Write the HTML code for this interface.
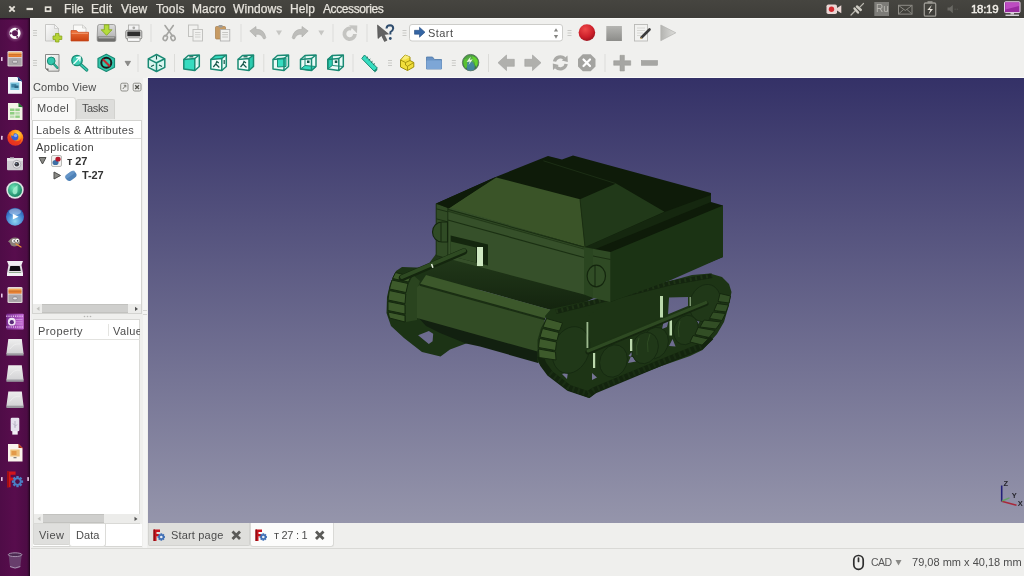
<!DOCTYPE html>
<html>
<head>
<meta charset="utf-8">
<title>FreeCAD</title>
<style>
*{box-sizing:border-box;margin:0;padding:0}
html,body{width:1024px;height:576px;overflow:hidden;background:#efefed;font-family:"Liberation Sans","DejaVu Sans",sans-serif;}
#root{position:relative;width:1024px;height:576px;overflow:hidden;background:#efefed}
.abs{position:absolute}
#topbar{position:absolute;left:0;top:0;width:1024px;height:18px;background:linear-gradient(#464540,#3e3d39);}
#topbar .m{position:absolute;top:1.500px;-webkit-text-stroke:0.250px #e6e3dc;font-size:12px;line-height:15px;color:#e6e3dc;white-space:nowrap;letter-spacing:0.1px}
#launcher{position:absolute;left:0;top:18px;width:31px;height:558px;border-right:1px solid #f6f1f6;background:linear-gradient(#2a0626 0,rgba(42,6,38,0) 2.5px),linear-gradient(90deg,#4f0c47 0%,#580d4d 50%,#4d0c45 90%,#3a0a34 95%,#1f051c 100%);}
#view3d{position:absolute;left:148px;top:78px;width:876px;height:445px;background:linear-gradient(#343167 0%,#9595ab 100%);}
#combo{position:absolute;left:31px;top:78px;width:117px;height:470px;background:#efefed}
#tabbar{position:absolute;left:148px;top:523px;width:876px;height:25px;background:#efefed}
#status{position:absolute;left:31px;top:548px;width:993px;height:28px;background:#efefed;border-top:1px solid #d9d9d6}
.t,.m{will-change:transform}
.t{position:absolute;white-space:nowrap;color:#4a4a4a;font-size:12px;line-height:14px}
</style>
</head>
<body>
<div id="root">

<!-- TOPBAR -->
<div id="topbar">
<svg class="abs" style="left:0;top:0" width="1024" height="18" viewBox="0 0 1024 18">
  <!-- window controls -->
  <path d="M9.300,6.300 L14.700,11.700 M14.700,6.300 L9.300,11.700" stroke="#e4e0d8" stroke-width="1.900" fill="none"/>
  <rect x="26.500" y="7.900" width="6.500" height="2.200" fill="#e4e0d8"/>
  <rect x="45.600" y="7.200" width="4.900" height="4" fill="#2f2e2b" stroke="#e4e0d8" stroke-width="1.700"/>
  <!-- camera/record indicator -->
  <rect x="826.500" y="4.500" width="10.500" height="9.500" rx="1.800" fill="#ead6d4"/>
  <path d="M837,8 L841.300,5.200 V13.200 L837,10.500 Z" fill="#ead6d4"/>
  <circle cx="831.500" cy="9.200" r="2.700" fill="#d42a30"/>
  <!-- plug -->
  <g stroke="#b9b6ae" fill="none" stroke-linecap="round"><path d="M851,15 L855,11" stroke-width="1.200"/><path d="M863.500,3.500 L859.800,7.200" stroke-width="1.200"/><path d="M854.500,8.500 L858,12.500 M857,6.500 L860.800,10" stroke-width="2.400" stroke="#cfccc4"/></g>
  <!-- Ru -->
  <rect x="874.300" y="2" width="14.700" height="14" fill="#7d7c78"/>
  <!-- mail -->
  <rect x="898.500" y="5.300" width="13.500" height="8.800" fill="none" stroke="#8f8d87" stroke-width="1"/>
  <path d="M899,5.800 L905.300,10.500 L911.500,5.800 M899,13.600 L903.500,9.500 M911.500,13.600 L907,9.500" fill="none" stroke="#8f8d87" stroke-width=".9"/>
  <!-- battery -->
  <rect x="924.300" y="3" width="11.400" height="13.200" rx="1.200" fill="none" stroke="#9b9993" stroke-width="1.300"/>
  <rect x="927.500" y="1.200" width="5" height="2" fill="#9b9993"/>
  <path d="M931.800,5 L927.300,10 H930.300 L928.500,14.500 L933,9 H930 Z" fill="#e4e0d8"/>
  <!-- volume muted -->
  <path d="M947.500,7.600 H949.800 L952.800,5 V13.200 L949.800,10.600 H947.500 Z" fill="#6a6964"/>
  <path d="M954.500,9.200 H959" stroke="#5e5d59" stroke-width="1" stroke-dasharray="1.200 1"/>
  <!-- monitor -->
  <rect x="1004.500" y="1.800" width="15.500" height="10.800" rx="1" fill="#9a2aa0" stroke="#e9d9ea" stroke-width="1"/>
  <path d="M1005.500,2.800 H1019 V6 L1005.500,9.500 Z" fill="#c858cc" opacity=".75"/>
  <rect x="1010.500" y="13" width="3.500" height="1.500" fill="#cfcad0"/><rect x="1005.500" y="14.600" width="13.500" height="1.300" fill="#e4e0e6"/>
</svg>
  <span class="m" style="left:875.600px;top:2.300px;font-size:10px;line-height:14px;color:#b9b7b1;letter-spacing:0;-webkit-text-stroke:0">Ru</span>
  <span class="m" style="left:64px">File</span>
  <span class="m" style="left:91px">Edit</span>
  <span class="m" style="left:121px">View</span>
  <span class="m" style="left:156px">Tools</span>
  <span class="m" style="left:192px">Macro</span>
  <span class="m" style="left:233px">Windows</span>
  <span class="m" style="left:290px">Help</span>
  <span class="m" style="left:323px;letter-spacing:-0.400px">Accessories</span>
  <span class="m" style="left:970.500px;font-size:11.500px;letter-spacing:-0.300px;color:#f2efe9;-webkit-text-stroke:0.450px #f2efe9">18:19</span>
</div>

<!-- LAUNCHER -->
<div id="launcher">
<svg class="abs" style="left:0;top:0" width="31" height="558" viewBox="0 18 31 558">
<defs>
  <radialGradient id="ubG" cx=".5" cy=".5" r=".5"><stop offset="0" stop-color="#fff" stop-opacity=".55"/><stop offset=".6" stop-color="#e8c8e4" stop-opacity=".3"/><stop offset="1" stop-color="#c090c0" stop-opacity="0"/></radialGradient>
  <radialGradient id="ffG" cx=".65" cy=".25" r=".9"><stop offset="0" stop-color="#ffd83a"/><stop offset=".4" stop-color="#ff8a16"/><stop offset=".8" stop-color="#e8311f"/><stop offset="1" stop-color="#c2185b"/></radialGradient>
  <radialGradient id="grG" cx=".4" cy=".35" r=".7"><stop offset="0" stop-color="#6fe6b9"/><stop offset="1" stop-color="#12805f"/></radialGradient>
  <radialGradient id="blG" cx=".5" cy=".75" r=".8"><stop offset="0" stop-color="#8fd6f2"/><stop offset=".6" stop-color="#3f7fce"/><stop offset="1" stop-color="#24499a"/></radialGradient>
  <linearGradient id="drG" x1="0" y1="0" x2="0" y2="1"><stop offset="0" stop-color="#eeeeee"/><stop offset="1" stop-color="#d2d2d4"/></linearGradient>
  <linearGradient id="viG" x1="0" y1="0" x2="1" y2="0"><stop offset="0" stop-color="#7a2c92"/><stop offset="1" stop-color="#c56ad6"/></linearGradient>
  <linearGradient id="orG" x1="0" y1="0" x2="0" y2="1"><stop offset="0" stop-color="#f9b562"/><stop offset="1" stop-color="#e37222"/></linearGradient>
</defs>
<!-- pips -->
<g fill="#e9c9e6"><rect x="1" y="57" width="1.600" height="4" rx=".5"/><rect x="1" y="135.800" width="1.600" height="4" rx=".5"/><rect x="1" y="293.500" width="1.600" height="4" rx=".5"/><rect x="1" y="477" width="1.600" height="4" rx=".5"/><rect x="27.300" y="477" width="1.600" height="4" rx=".5"/></g>
<!-- ubuntu -->
<circle cx="15" cy="33.300" r="9" fill="url(#ubG)"/>
<circle cx="15" cy="33.300" r="4.300" fill="none" stroke="#fff" stroke-width="2.600"/>
<circle cx="15" cy="33.300" r="2.800" fill="#5b1c55"/>
<g fill="#5b1c55"><circle cx="10.700" cy="33.300" r="1.100"/><circle cx="17.200" cy="29.600" r="1.100"/><circle cx="17.200" cy="37" r="1.100"/></g>
<!-- files -->
<rect x="7.500" y="51" width="15" height="15.600" rx="1.300" fill="#d9cfd0"/>
<rect x="8.500" y="52.300" width="13" height="4.700" fill="url(#orG)"/>
<rect x="8.500" y="54" width="13" height="1.200" fill="#b85a1c" opacity=".6"/>
<rect x="8.500" y="58" width="13" height="7.600" rx=".8" fill="#a9a5a8"/>
<rect x="12.500" y="60.300" width="5" height="2.800" rx="1" fill="#d5d2d4" stroke="#77747a" stroke-width=".6"/>
<!-- writer -->
<path d="M8,77 H18 L22,81 V93.700 H8 Z" fill="#f4f6fa"/>
<path d="M18,77 L22,81 H18 Z" fill="#1f3f75"/><path d="M17,77 H18 L22,81 V82 Z" fill="#23508f"/>
<rect x="10.300" y="82.500" width="9" height="7.500" fill="#7cc3dc"/><rect x="11.300" y="84" width="5" height="3.500" fill="#3f86a6"/><rect x="14.500" y="85.500" width="4" height="2.500" fill="#2c6483"/>
<!-- calc -->
<path d="M8,103 H18.500 L22.500,107 V120 H8 Z" fill="#f3f3e6"/>
<path d="M18,103 H18.500 L22.500,107 V108 Z" fill="#2e9a3c"/><path d="M18.500,103 L22.500,107 H18.500 Z" fill="#1d7a2b"/>
<g fill="#8fce82"><rect x="10" y="108.500" width="4.500" height="2.600"/><rect x="15.300" y="108.500" width="4.500" height="2.600"/><rect x="10" y="112" width="4.500" height="2.600"/><rect x="15.300" y="112" width="4.500" height="2.600" fill="#b9dcae"/><rect x="10" y="115.500" width="4.500" height="2.400" fill="#b9dcae"/><rect x="15.300" y="115.500" width="4.500" height="2.400"/></g>
<!-- firefox -->
<circle cx="15.300" cy="137.800" r="8" fill="url(#ffG)"/>
<circle cx="14.800" cy="136.800" r="3.600" fill="#3a5fd0"/><circle cx="15.600" cy="135.600" r="1.700" fill="#7ea8ff"/>
<path d="M8.500,134 Q11,139 15,141 Q19.500,142 21.500,138 Q21,144.500 15.300,145.300 Q8,144.500 8.500,134Z" fill="#e8311f" opacity=".85"/>
<path d="M11,133.500 Q13,131 15,132.500 Q13,134 13.500,136 Q11,136 11,133.500Z" fill="#ff9a1e"/>
<!-- camera -->
<rect x="7" y="159.500" width="16" height="10.800" rx="1" fill="#cfcdd2"/><rect x="7" y="158" width="16" height="3" fill="#e4e2e6"/>
<rect x="10" y="157.300" width="4" height="1.600" fill="#bdbbc0"/>
<circle cx="16.800" cy="164.300" r="4" fill="#e9e8ec" stroke="#9a989e" stroke-width=".7"/><circle cx="16.800" cy="164.300" r="2.300" fill="#3a3a42"/><circle cx="16.200" cy="163.600" r=".7" fill="#9bb0d0"/>
<!-- green orb -->
<circle cx="15" cy="190" r="8.700" fill="#dfe5e4"/><circle cx="15" cy="190" r="7.100" fill="url(#grG)"/>
<path d="M17.500,185 Q14,187 12.500,191 Q12.500,194 15,194.500 Q17.800,193.500 17.500,190 Z" fill="#a9f2d3" opacity=".8"/>
<!-- blue orb -->
<circle cx="15" cy="216.700" r="9" fill="url(#blG)"/>
<ellipse cx="15" cy="211.700" rx="6" ry="3.200" fill="#fff" opacity=".35"/>
<path d="M12.800,213.800 L18.600,216.700 L12.800,219.600 Z" fill="#fff"/>
<!-- gimp -->
<path d="M8,241.500 L10.500,239 Q14,236.800 18,238 Q20.500,239.500 20,243 Q18,246.500 14,246.500 Q10.500,246 10,243 Z" fill="#8a7f78"/>
<circle cx="13.800" cy="240.800" r="1.900" fill="#fff"/><circle cx="17.300" cy="240.600" r="1.900" fill="#fff"/><circle cx="14.200" cy="241" r=".8" fill="#222"/><circle cx="17.600" cy="240.900" r=".8" fill="#222"/>
<path d="M16,244 L21,247" stroke="#e8923a" stroke-width="1.300" stroke-linecap="round"/>
<!-- scanner -->
<path d="M7,261 H23 L21.500,265 H8.500 Z" fill="#f0eef2"/>
<path d="M8.500,265 H21.500 L23,273 H7 Z" fill="#e2e0e4"/>
<path d="M10.300,266 H19.700 L20.700,271 H9.300 Z" fill="#0d0d10"/>
<rect x="7" y="273" width="16" height="3" fill="#f3f2f5"/><rect x="9" y="272" width="12" height=".8" fill="#7fa07a"/>
<!-- files drawer -->
<rect x="7.500" y="287" width="15" height="16" rx="1.300" fill="#e1d9da"/>
<rect x="8.500" y="288.600" width="13" height="5" fill="url(#orG)"/><rect x="8.500" y="290.500" width="13" height="1.200" fill="#b85a1c" opacity=".6"/>
<rect x="8.500" y="294.600" width="13" height="7.400" rx=".8" fill="#aaa6a9"/>
<rect x="12.800" y="297" width="4.500" height="2.800" rx="1.200" fill="#e5e3e5" stroke="#77747a" stroke-width=".6"/>
<!-- video -->
<rect x="6.300" y="313.800" width="17.500" height="15.600" rx="1" fill="url(#viG)"/>
<path d="M6.300,316.200 H23.800 M6.300,327 H23.800" stroke="#e9c6f0" stroke-width="1.400" stroke-dasharray="1 1.200"/>
<circle cx="11.800" cy="321.700" r="3.900" fill="#f0e4f4"/><circle cx="11.800" cy="322.200" r="2.100" fill="#5a2a7a"/>
<path d="M15.500,319.500 H22.500 M15.500,321.800 H22.500 M15.500,324 H22.500" stroke="#d59be2" stroke-width=".8"/>
<!-- drives -->
<g id="drv"><path d="M8.300,339 H21.800 L23.600,354 H6.400 Z" fill="url(#drG)"/><path d="M6.400,353.300 H23.600 V355.600 H6.400 Z" fill="#9b9aa0"/><path d="M10,349 Q14,343 20,344" stroke="#efefef" stroke-width="1" fill="none" opacity=".8"/></g>
<use href="#drv" y="26.200"/><use href="#drv" y="52.400"/>
<!-- usb -->
<rect x="10.700" y="417.800" width="8.600" height="13.500" rx="1.300" fill="#e6e2ee"/><rect x="12.300" y="431" width="5.400" height="3.600" fill="#f2f0f6"/>
<path d="M15,421 V428 M15,425.500 L13,423.500 M15,426.500 L17,424.500" stroke="#a9a4b8" stroke-width=".8" fill="none"/>
<!-- impress -->
<path d="M8,444 H18.500 L22.500,448 V461.600 H8 Z" fill="#faf4ec"/>
<path d="M18.500,444 L22.500,448 H18.500 Z" fill="#a8321a"/><path d="M18,444 H18.500 L22.500,448 V449 Z" fill="#d5542a"/>
<rect x="10.300" y="449.500" width="9.400" height="7" fill="#eec07a"/><rect x="11.500" y="451" width="5" height="4" fill="#e39a4a"/><rect x="13.500" y="457.300" width="3" height=".9" fill="#555"/>
<!-- freecad -->
<path d="M7,471.600 H15.600 V474.800 H10.600 V477.600 H14 V480.600 H10.600 V487.200 H7 Z" fill="#d4141c"/>
<path d="M7,471.600 H9 V487.200 H7 Z" fill="#9e0f16"/>
<g transform="translate(17.500 481.600)"><g fill="#4a7fc4"><rect x="-1.200" y="-5.600" width="2.400" height="11.200"/><rect x="-1.200" y="-5.600" width="2.400" height="11.200" transform="rotate(45)"/><rect x="-1.200" y="-5.600" width="2.400" height="11.200" transform="rotate(90)"/><rect x="-1.200" y="-5.600" width="2.400" height="11.200" transform="rotate(135)"/></g><circle r="4" fill="#4a7fc4"/><circle r="2.300" fill="#4f0f48"/></g>
<!-- trash -->
<path d="M8.500,554.500 L10,567 Q15,570 20.300,567 L21.800,554.500 Z" fill="#6a4470" opacity=".9"/>
<ellipse cx="15.100" cy="554.700" rx="6.800" ry="1.900" fill="#4c2a52" stroke="#a78fae" stroke-width="1"/>
<path d="M10,566.500 Q15,569.500 20.300,566.500" stroke="#a78fae" stroke-width="1" fill="none"/>
</svg>
</div>

<!-- TOOLBAR -->
<div id="toolbar" class="abs" style="left:31px;top:18px;width:993px;height:60px;background:#f0f0ee;border-top:1px solid #f8f8f7">
<svg class="abs" style="left:0;top:-1px" width="993" height="60" viewBox="31 18 993 60">
<defs>
  <linearGradient id="pgG" x1="0" y1="0" x2="1" y2="1"><stop offset="0" stop-color="#fbfbfb"/><stop offset="1" stop-color="#d9d9d7"/></linearGradient>
  <linearGradient id="foG" x1="0" y1="0" x2="0" y2="1"><stop offset="0" stop-color="#f0733a"/><stop offset="1" stop-color="#c8400f"/></linearGradient>
  <linearGradient id="hdG" x1="0" y1="0" x2="0" y2="1"><stop offset="0" stop-color="#dcdcdc"/><stop offset="1" stop-color="#a9a9a9"/></linearGradient>
  <radialGradient id="rcG" cx=".4" cy=".3" r=".8"><stop offset="0" stop-color="#ef4a4a"/><stop offset=".6" stop-color="#cc1f2a"/><stop offset="1" stop-color="#8f0f1c"/></radialGradient>
  <linearGradient id="sqG" x1="0" y1="0" x2="0" y2="1"><stop offset="0" stop-color="#b5b5b2"/><stop offset="1" stop-color="#8c8c89"/></linearGradient>
  <linearGradient id="plG" x1="0" y1="0" x2="1" y2="0"><stop offset="0" stop-color="#b4b4b1"/><stop offset="1" stop-color="#dededb"/></linearGradient>
  <radialGradient id="glG" cx=".4" cy=".35" r=".75"><stop offset="0" stop-color="#7fb8ea"/><stop offset="1" stop-color="#2a5a9a"/></radialGradient>
  <radialGradient id="glbG" cx=".45" cy=".4" r=".62"><stop offset="0" stop-color="#6cc44e"/><stop offset=".6" stop-color="#469a3e"/><stop offset="1" stop-color="#35654a"/></radialGradient>
  <g id="grip"><rect x="0" y="0" width="4" height="1" fill="#c9c9c6"/><rect x="0" y="2.500" width="4" height="1" fill="#c9c9c6"/><rect x="0" y="5" width="4" height="1" fill="#c9c9c6"/></g>
  <g id="sep"><rect x="0" y="0" width="1" height="18" fill="#dcdcd9"/></g>
  <g id="dda"><path d="M0,0 H6 L3,5 Z" fill="#c6c6c3"/></g>
  <!-- cube geometry in 18x18 box: front face F, top T, right R -->
  <g id="cubeW" fill="none" stroke="#1a8a74" stroke-width="1.500" stroke-linejoin="round">
    <path d="M1,5.500 L12,4.500 L12,16.500 L1,15 Z"/>
    <path d="M1,5.500 L5.500,1.500 L16.500,1 L12,4.500"/>
    <path d="M16.500,1 L16.500,12.500 L12,16.500"/>
  </g>
</defs>
<!-- ===== ROW 1 ===== -->
<use href="#grip" x="33" y="30"/>
<!-- new -->
<path d="M45.500,24.500 H54.500 L58.500,28.500 V41 H45.500 Z" fill="url(#pgG)" stroke="#bdbdba" stroke-width=".8"/>
<path d="M54.500,24.500 V28.500 H58.500 Z" fill="#f4f4f4" stroke="#bdbdba" stroke-width=".6"/>
<path d="M55.500,33.500 H59 V36 H61.800 V39.500 H59 V42 H55.500 V39.500 H53 V36 H55.500 Z" fill="#b5d334" stroke="#89a51d" stroke-width=".8" stroke-linejoin="round"/>
<!-- open -->
<path d="M73.500,25 H82.500 L86,28 V37 H73.500 Z" fill="#fafaf8" stroke="#c4c4c1" stroke-width=".8"/>
<path d="M82.500,25 V28 H86" fill="none" stroke="#c4c4c1" stroke-width=".7"/>
<path d="M71,30.500 H76.500 L78,32.300 H88.500 V41 H71 Z" fill="url(#foG)" stroke="#c2461a" stroke-width=".7"/>
<path d="M71.500,33.300 H88" stroke="#f7b08c" stroke-width=".9" opacity=".8"/>
<!-- save -->
<path d="M99.500,24.500 H113.500 Q115,24.500 115.300,26 L115.800,36 V40 Q115.800,41.500 114.300,41.500 H98.700 Q97.200,41.500 97.200,40 V36 L97.700,26 Q98,24.500 99.500,24.500 Z" fill="url(#hdG)" stroke="#8d8d8b" stroke-width=".8"/>
<path d="M97.500,36.500 H115.500 V40 Q115.500,41.200 114.300,41.200 H98.700 Q97.500,41.200 97.500,40 Z" fill="#6f6f6d"/><rect x="98.500" y="37.300" width="16" height="1" fill="#c4c4c4"/>
<path d="M104.300,24.800 H108.900 V29.800 H112 L106.600,35.300 L101.200,29.800 H104.300 Z" fill="#b4dc3c" stroke="#7fa516" stroke-width=".8" stroke-linejoin="round"/>
<!-- print -->
<rect x="128.500" y="25" width="10.500" height="7" fill="#f3f3f3" stroke="#a9a9a6" stroke-width=".8"/>
<circle cx="133.800" cy="27.800" r="1.400" fill="#a9a9a6"/>
<rect x="125.800" y="30.300" width="16" height="8.700" rx="1.500" fill="#dededc" stroke="#7d7d7b" stroke-width=".9"/>
<rect x="127.300" y="31.600" width="13" height="4.600" rx=".5" fill="#2f2f2f"/>
<rect x="127.500" y="37.800" width="12.500" height="3.600" rx=".8" fill="#fbfbfb" stroke="#8f8f8c" stroke-width=".8"/>
<use href="#sep" x="150.500" y="24"/>
<!-- cut -->
<g fill="none" stroke="#a5a5a2" stroke-width="1.600" stroke-linecap="round">
  <path d="M165,25.500 L172.500,36"/><path d="M173.300,25.500 L165.800,36"/>
  <ellipse cx="165.300" cy="38" rx="2" ry="2.600" transform="rotate(25 165.300 38)"/><ellipse cx="173" cy="38" rx="2" ry="2.600" transform="rotate(-25 173 38)"/>
</g>
<!-- copy -->
<g fill="#f1f1ef" stroke="#bdbdba" stroke-width=".9"><rect x="188.500" y="25" width="9.500" height="11.500"/><rect x="193" y="29.500" width="9.500" height="11.500"/></g>
<path d="M195,32.500 H200.500 M195,34.700 H200.500 M195,37 H200.500" stroke="#c9c9c6" stroke-width=".8"/>
<!-- paste -->
<rect x="215.500" y="26.500" width="10" height="12.500" rx="1" fill="#c79a62" stroke="#a57d4a" stroke-width=".7"/>
<rect x="218.500" y="25" width="4.200" height="2.600" rx=".8" fill="#9c9c9a"/>
<rect x="220.300" y="29.500" width="9.500" height="11.500" fill="#f1f1ef" stroke="#ababaa" stroke-width=".8"/>
<path d="M222.200,32.500 H228 M222.200,34.700 H228 M222.200,37 H228" stroke="#bcbcb9" stroke-width=".8"/>
<use href="#sep" x="240.500" y="24"/>
<!-- undo -->
<path d="M249.800,31 L256,26.500 V29.300 Q264,28.800 265.800,37.500 Q265.500,39.300 263.500,38.800 Q261.500,33.500 256,34.300 V37 Z" fill="#bdbdba" stroke="#adadaa" stroke-width=".6" stroke-linejoin="round"/>
<use href="#dda" x="276" y="30.500"/>
<!-- redo -->
<path d="M308.200,31 L302,26.500 V29.300 Q294,28.800 292.200,37.500 Q292.500,39.300 294.500,38.800 Q296.500,33.500 302,34.300 V37 Z" fill="#bdbdba" stroke="#adadaa" stroke-width=".6" stroke-linejoin="round"/>
<use href="#dda" x="318.300" y="30.500"/>
<use href="#sep" x="332.500" y="24"/>
<!-- refresh -->
<path d="M355,34 A5.300,5.300 0 1 1 351.500,28.800" fill="none" stroke="#c4c4c1" stroke-width="3.800"/>
<path d="M349,25.300 L357.300,25.600 L357,33.300 Z" fill="#c4c4c1"/>
<use href="#sep" x="366.500" y="24"/>
<!-- whats this -->
<path d="M377.500,25 L378,38.500 L381.500,35.500 L384.500,41.500 L387,40.300 L384.200,34.500 L388.500,34 Z" fill="#636363" stroke="#4a4a4a" stroke-width=".6" stroke-linejoin="round"/>
<path d="M386.500,28.500 Q386.800,25.300 390,25.300 Q393.300,25.500 393.200,28.500 Q393,30.500 390.500,32 L390.300,34.500" fill="none" stroke="#2f4d6e" stroke-width="2"/>
<circle cx="390.300" cy="38.500" r="1.400" fill="#2f4d6e"/>
<use href="#grip" x="402.500" y="30"/>
<!-- combobox -->
<rect x="409.500" y="24.500" width="153" height="16.500" rx="2.500" fill="#fff" stroke="#cdcdca" stroke-width="1"/>
<path d="M414.500,30.300 H419.500 V27.300 L425,32.200 L419.500,37.200 V34.200 H414.500 Z" fill="#3465a4" stroke="#274e82" stroke-width=".6" stroke-linejoin="round"/>
<path d="M553.900,31.600 L556,28.200 L558.100,31.600 Z M553.900,34.900 L556,38.800 L558.100,34.900 Z" fill="#858582"/>
<use href="#grip" x="567.500" y="30"/>
<!-- macro record / stop / edit / play -->
<circle cx="586.900" cy="32.600" r="8.300" fill="url(#rcG)"/>
<rect x="606.300" y="26" width="15.600" height="15" fill="url(#sqG)"/>
<rect x="634.500" y="24.500" width="13" height="16.500" fill="#f2f2f0" stroke="#b9b9b6" stroke-width=".9"/>
<path d="M637,28 H645 M637,30.500 H645 M637,33 H643 M637,35.500 H641" stroke="#d0d0cd" stroke-width=".8"/>
<path d="M649.500,29.500 L641.500,37.500" stroke="#3a3a3a" stroke-width="2.600" stroke-linecap="round"/><path d="M641.200,37.300 L639.800,39.300 L642.200,38.500 Z" fill="#d9b36a"/>
<path d="M660.800,25 L675.800,32.800 L660.800,40.700 Z" fill="url(#plG)" stroke="#b3b3b0" stroke-width=".7" stroke-linejoin="round"/>
<!-- ===== ROW 2 ===== -->
<use href="#grip" x="33" y="60"/>
<!-- fit all -->
<path d="M45.500,54.500 H59 V71.200 H48.500 L45.500,68.500 Z" fill="url(#pgG)" stroke="#7d7d7b" stroke-width=".9"/>
<path d="M45.500,68.500 H48.500 V71.200 Z" fill="#6b6b69"/>
<circle cx="51.200" cy="61" r="3.900" fill="#33c7ad" stroke="#1a8a74" stroke-width="1"/>
<path d="M53.800,64 L57.300,67.800" stroke="#1a8a74" stroke-width="2.400" stroke-linecap="round"/><path d="M53.800,64 L57.300,67.800" stroke="#33c7ad" stroke-width="1" stroke-linecap="round"/>
<!-- fit selection -->
<circle cx="77" cy="60.500" r="5.200" fill="#3ccdb3" stroke="#1a8a74" stroke-width="1.300"/>
<path d="M80.300,57 L73.800,63.800 M80.300,57 L79.800,60.800 M80.300,57 L76.600,57.600" stroke="#eafffb" stroke-width="1.300" fill="none" stroke-linecap="round"/>
<path d="M81.200,65 L86.800,70" stroke="#1a8a74" stroke-width="3.200" stroke-linecap="round"/><path d="M81.200,65 L86.800,70" stroke="#3ccdb3" stroke-width="1.500" stroke-linecap="round"/>
<!-- draw style -->
<path d="M106.300,54.300 L114.500,58.500 V67.300 L106.300,71.500 L98,67.300 V58.500 Z" fill="#33c7ad" stroke="#1a8a74" stroke-width="1.200" stroke-linejoin="round"/>
<circle cx="106.300" cy="62.800" r="5" fill="none" stroke="#1c1c1c" stroke-width="2"/>
<path d="M102.800,59.300 L109.800,66.300" stroke="#c6262e" stroke-width="2"/>
<path d="M125,61.300 H130.600 L127.800,66 Z" fill="#8d8d8a" stroke="#6d6d6a" stroke-width=".5"/>
<use href="#sep" x="137.500" y="54"/>
<!-- axo -->
<path d="M156.500,54.500 L164.800,58.800 V67.300 L156.500,71.500 L148.300,67.300 V58.800 Z" fill="#d9f6f0" stroke="#1a8a74" stroke-width="1.500" stroke-linejoin="round"/>
<path d="M148.300,58.800 L156.500,62.800 L164.800,58.800 M156.500,62.800 V71.500" fill="none" stroke="#1a8a74" stroke-width="1.500"/>
<path d="M156.500,55.500 V59.500 M151,66.500 L154,65 M162,66.500 L159,65" stroke="#14574a" stroke-width="1.100"/>
<use href="#sep" x="174" y="54"/>
<!-- front -->
<g transform="translate(182.800 54)"><path d="M1,5.500 L12,4.500 L12,16.500 L1,15 Z" fill="#36dcc0"/><path d="M1,5.500 L5.500,1.500 L16.500,1 L12,4.500Z" fill="#e8fbf7"/><path d="M16.500,1 L16.500,12.500 L12,16.500 L12,4.500Z" fill="#e8fbf7"/><rect x="6.500" y="2.200" width="4" height="1.200" fill="#14574a"/><rect x="13.800" y="6" width="1.200" height="5" fill="#bff3e9"/><use href="#cubeW"/></g>
<!-- top -->
<g transform="translate(209.800 54)"><path d="M1,5.500 L12,4.500 L12,16.500 L1,15 Z" fill="#f2fdfb"/><path d="M1,5.500 L5.500,1.500 L16.500,1 L12,4.500Z" fill="#36dcc0"/><path d="M16.500,1 L16.500,12.500 L12,16.500 L12,4.500Z" fill="#e8fbf7"/><path d="M3.500,13 L6,10 L9.500,13.500 M6,10 L7,7.500 L9,9" stroke="#14574a" stroke-width="1.200" fill="none"/><rect x="13.800" y="6" width="1.200" height="4" fill="#14574a"/><use href="#cubeW"/></g>
<!-- right -->
<g transform="translate(237 54)"><path d="M1,5.500 L12,4.500 L12,16.500 L1,15 Z" fill="#f2fdfb"/><path d="M1,5.500 L5.500,1.500 L16.500,1 L12,4.500Z" fill="#e8fbf7"/><path d="M16.500,1 L16.500,12.500 L12,16.500 L12,4.500Z" fill="#2ccbb0"/><path d="M3.500,13 L6,10 L9.500,13.500 M6,10 L7,7.500 L9,9" stroke="#14574a" stroke-width="1.200" fill="none"/><rect x="6.500" y="2.200" width="4" height="1.200" fill="#14574a"/><use href="#cubeW"/></g>
<use href="#sep" x="263.300" y="54"/>
<!-- rear -->
<g transform="translate(272 54)"><path d="M1,5.500 L12,4.500 L12,16.500 L1,15 Z" fill="#eafaf6"/><path d="M1,5.500 L5.500,1.500 L16.500,1 L12,4.500Z" fill="#e8fbf7"/><path d="M16.500,1 L16.500,12.500 L12,16.500 L12,4.500Z" fill="#e8fbf7"/><path d="M5.500,4.500 L14,4 L14,12.500 L5.500,13 Z" fill="#36dcc0" stroke="#1a8a74" stroke-width="1"/><use href="#cubeW"/></g>
<!-- bottom -->
<g transform="translate(299.500 54)"><path d="M1,5.500 L12,4.500 L12,16.500 L1,15 Z" fill="#eafaf6"/><path d="M1,5.500 L5.500,1.500 L16.500,1 L12,4.500Z" fill="#e8fbf7"/><path d="M16.500,1 L16.500,12.500 L12,16.500 L12,4.500Z" fill="#e8fbf7"/><path d="M1,15 L5.500,11.500 L16.500,12.500 L12,16.500 Z" fill="#36dcc0" stroke="#1a8a74" stroke-width="1"/><path d="M5.500,1.500 V11.500" stroke="#1a8a74" stroke-width="1"/><rect x="7.500" y="6.500" width="2.500" height="2.500" fill="#14574a"/><use href="#cubeW"/></g>
<!-- left -->
<g transform="translate(326.800 54)"><path d="M1,5.500 L12,4.500 L12,16.500 L1,15 Z" fill="#eafaf6"/><path d="M1,5.500 L5.500,1.500 L16.500,1 L12,4.500Z" fill="#e8fbf7"/><path d="M16.500,1 L16.500,12.500 L12,16.500 L12,4.500Z" fill="#e8fbf7"/><path d="M1,5.500 L5.500,1.500 L5.500,11.500 L1,15 Z" fill="#2ccbb0" stroke="#1a8a74" stroke-width="1"/><path d="M5.500,11.500 L16.500,12.500" stroke="#1a8a74" stroke-width="1"/><rect x="8" y="6.500" width="2.500" height="2.500" fill="#14574a"/><use href="#cubeW"/></g>
<use href="#sep" x="352.500" y="54"/>
<!-- measure -->
<path d="M364.500,55 L377.300,68 L374,71 L361.800,58.500 Z" fill="#36dcc0" stroke="#1a8a74" stroke-width="1" stroke-linejoin="round"/>
<path d="M374,71 L377.300,68 L377.300,70 L374.800,72.500 Z" fill="#1a8a74"/>
<path d="M366.500,58 L368,56.800 M368.800,60.300 L370.300,59 M371,62.500 L372.500,61.300 M373.300,64.800 L374.800,63.500" stroke="#14574a" stroke-width=".9"/>
<use href="#grip" x="388" y="60"/>
<!-- part -->
<path d="M400.500,60 L405,55 L410,57 L410,60.500 L413.800,62.500 L413.800,67 L407.500,70.500 L400.500,67 Z" fill="#f1de3a" stroke="#9f8f0a" stroke-width="1" stroke-linejoin="round"/>
<path d="M400.500,60 L405.500,62.500 L410,60.500 M405.500,62.500 V65 L407.500,66.300 L413.800,62.500 M407.500,66.300 V70.500" fill="none" stroke="#9f8f0a" stroke-width=".9"/>
<path d="M405,55 L410,57 L405.500,59.500 L401.500,59.800 Z" fill="#fbf08a" opacity=".8"/>
<!-- folder -->
<path d="M426.500,57 H432.500 L434.500,59.500 H441.500 V69 H426.500 Z" fill="#6a93c4" stroke="#4f78aa" stroke-width=".8"/>
<path d="M426.500,60.500 H441.500 V69 H426.500 Z" fill="#7da6d6"/>
<use href="#grip" x="451.800" y="60"/>
<!-- globe -->
<circle cx="470.600" cy="62.600" r="8.200" fill="url(#glbG)" stroke="#5a7560" stroke-width=".9"/>
<path d="M467.500,62.500 Q470.500,60.500 473,62.500 Q475.500,66 474.500,69.500 Q471,71.300 467.500,70 Q465.500,66 467.500,62.500Z" fill="#4583a6" opacity=".9"/>
<path d="M472,56.200 Q476,56.500 477.800,60.500 Q478.300,64 476.500,67 Q474.500,65.500 474.800,62.500 Q472.500,60 472,56.200Z" fill="#63d22e"/>
<path d="M464.300,59.500 Q466,58 467.300,59.500 Q466.300,62 467.300,65 Q467,67.500 465.800,68.500 Q463.800,66.500 463.500,63 Q463.500,61 464.300,59.500Z" fill="#5ac232"/>
<path d="M470.800,56.500 L466.500,62 L469.800,61.500 L468.600,65 L472.800,59.300 L469.800,59.900 Z" fill="#f4fbf2" opacity=".92"/>
<use href="#sep" x="488" y="54"/>
<!-- back / fwd -->
<path d="M498,62.700 L506.500,55 V59.300 H514.300 V66.300 H506.500 V70.600 Z" fill="#b0b0ad" stroke="#a0a09d" stroke-width=".6" stroke-linejoin="round"/>
<path d="M541,62.700 L532.500,55 V59.300 H524.800 V66.300 H532.500 V70.600 Z" fill="#b0b0ad" stroke="#a0a09d" stroke-width=".6" stroke-linejoin="round"/>
<!-- reload -->
<g fill="none" stroke="#a9a9a6" stroke-width="3.300"><path d="M554.500,61.500 A6,6 0 0 1 564.500,58.500"/><path d="M566.200,64 A6,6 0 0 1 556,67"/></g>
<path d="M561.800,60.500 L567.500,55.500 L567.800,62 Z M558.800,65 L553,70 L552.800,63.500 Z" fill="#a9a9a6"/>
<!-- stop -->
<path d="M582.800,54.300 H590.700 L595.500,59 V66.500 L590.700,71.200 H582.800 L578,66.500 V59 Z" fill="#a3a3a0"/>
<path d="M583.500,59.500 L590,66 M590,59.500 L583.500,66" stroke="#fff" stroke-width="2.200" stroke-linecap="round"/>
<use href="#sep" x="604.500" y="54"/>
<!-- plus / minus -->
<path d="M620,55.300 H624.400 V60.700 H630.700 V65.300 H624.400 V71 H620 V65.300 H613.700 V60.700 H620 Z" fill="#a6a6a3" stroke="#969693" stroke-width=".5"/>
<rect x="641.300" y="60.500" width="16.300" height="4.800" fill="#a6a6a3" stroke="#969693" stroke-width=".5"/>
</svg>
<span class="t" style="left:397.0px;top:6.8px;font-size:11px;letter-spacing:0.44px;color:#4c4c4c">Start</span>
</div>

<div class="abs" style="left:147px;top:77px;width:877px;height:1px;background:#fafaf9"></div>
<!-- 3D VIEW -->
<div id="view3d">
<svg class="abs" style="left:0;top:0;filter:blur(0.350px)" width="876" height="445" viewBox="148 78 876 445">
<defs>
  <linearGradient id="shadG" x1="0" y1="0" x2="0" y2="1"><stop offset="0" stop-color="#22391a"/><stop offset="1" stop-color="#13230e"/></linearGradient>
</defs>
<!-- ===== FAR TRACK ===== -->
<path fill="#1c3315" fill-rule="evenodd" d="M402,267 L396,271 L390,284 L387,297 L386.500,313 L391,326 L404,338 L422,352 L440.500,356.500 L450,349.500 L466,343.500 L480,340 L480,290 L430,268 Z M418.100,335.300 L428.800,331 L433.200,333.800 L432.600,341.300 L428.800,344.100 Z"/>
<!-- far track inner side -->
<path fill="#2a441f" d="M413,275 L420,281 L417,290 L417,320 L406,322 L405,300 L407,287 Z"/>
<!-- far track pads -->
<g fill="#3d5a2b" stroke="#15280f" stroke-width="1">
  <path d="M395.500,272.500 L411,276.500 L408.500,282 L392.500,278.500 Z"/>
  <path d="M392,280 L408,283.500 L406,292.500 L389.500,289 Z"/>
  <path d="M389.300,290.500 L405.800,294 L405,303.500 L388,300 Z"/>
  <path d="M388,301.500 L405,305 L405,314 L388,310.500 Z"/>
  <path d="M388,312 L405,315.500 L405,322 L389.500,318 Z"/>
</g>
<!-- ===== LOWER HULL ===== -->
<path fill="#122010" d="M417,316 L538,350 L538,363 L480,346.500 L466,343.500 L440,333 L426,326 Z"/>
<path fill="url(#shadG)" d="M436,254 L584,293 L594,298 L562,313 L551,310 L426,275 L430,262 Z"/>
<path fill="#324c25" d="M417,287.500 L419.800,284.400 L545,318.800 L537.500,351.500 L417,318 Z"/>
<path fill="#3c582b" d="M426,275 L551.300,310 L545,318.800 L419.800,284.400 Z"/>
<path fill="none" stroke="#1a2e13" stroke-width="2" d="M419.800,284.800 L545,319.200"/>
<!-- ===== NEAR TRACK + RUNNING GEAR ===== -->
<path fill="#1d3415" fill-rule="evenodd" d="M545,316 L551,309 L610,296 L670,281 L692,275 L710,273.500 L722,277 L729,284 L731.500,292 L729,305 L724,322 L717,334 L710,342 L702.500,350 L690,356 L660,366.500 L630,378 L600,389.500 L589.500,398 L567.500,390 L553,379 L545,371 L537.500,361.500 L537.500,340 L541,328 L546,318.800 Z
 M667.500,297.500 L688,297 L688,306 L667.500,314.400 Z
 M695,320 L700,321 L697,326 Z
 M664,320 L669,319 L667,327 L662,329 Z
 M669,346 L672.500,339 L675.600,346.500 Z
 M628,363 L632,354 L636,361.500 Z
 M562,374 L568,372 L567,379 Z
 M592,373 L597,377.500 L592,380 Z
 M628.500,356 L633,350 L636,358 Z"/>
<!-- lower side hull plate -->
<path fill="#1d3415" d="M610,300 L670,281 L668,315 L600,343 L586,350 L586,318 Z"/>
<!-- wheels -->
<g fill="#203818" stroke="#162a11" stroke-width="0.900">
  <ellipse cx="705" cy="303" rx="15" ry="19" transform="rotate(20 705 303)"/>
  <ellipse cx="686" cy="330" rx="12" ry="15" transform="rotate(20 686 330)"/>
  <ellipse cx="655" cy="343" rx="13" ry="16" transform="rotate(20 655 343)"/>
  <ellipse cx="645" cy="348" rx="13" ry="16" transform="rotate(20 645 348)"/>
  <ellipse cx="613.500" cy="361" rx="13.500" ry="16.500" transform="rotate(20 613.500 361)"/>
  <ellipse cx="571" cy="350" rx="18" ry="24" transform="rotate(20 571 350)"/>
</g>
<g fill="none" stroke="#3a5a2c" stroke-width="0.800" opacity=".7">
  <path d="M650,334 Q646,342 648,352"/><path d="M639,338 Q635,346 637,355"/><path d="M680,321 Q677,328 679,337"/>
</g>
<!-- bottom teeth band -->
<path fill="none" stroke="#13240e" stroke-width="6.500" stroke-linejoin="round" d="M540.500,356 L543,364 L550,373.500 L569,388 L588.500,394.500 L594,390.500 L660,363 L701,346.500 L711,337"/>
<path fill="none" stroke="#2a4520" stroke-width="5.500" stroke-dasharray="2.200 3.300" d="M550,373 L569,387.500 L588.500,394 L594,390 L660,362.500 L701,346" opacity=".28"/>
<!-- top teeth -->
<path fill="none" stroke="#14250f" stroke-width="4.500" d="M556,311.800 L610,298.300 L670,283.300 L712,275.800"/><path fill="none" stroke="#263f1c" stroke-width="4" stroke-dasharray="2 3.500" d="M556,311.500 L610,298 L670,283 L712,275.500" opacity=".55"/>
<!-- front pads near track -->
<g fill="#3d5a2b" stroke="#15280f" stroke-width="1">
  <path d="M546.500,318.500 L562.500,323 L559.500,331 L543,327 Z"/>
  <path d="M542.500,328.500 L559,332.500 L557,340.500 L540,337 Z"/>
  <path d="M539.500,338.500 L556.500,342 L555.500,350.500 L538.500,347.500 Z"/>
  <path d="M538.500,349 L555.500,352 L556,360 L539,357.500 Z"/>
</g>
<!-- rear pads near track -->
<g fill="#324e25" stroke="#15280f" stroke-width="1">
  <path d="M720,293.500 L730.500,296 L729,303 L718,301.500 Z"/>
  <path d="M717,303.500 L728.500,305 L726,312 L714,310.500 Z"/>
  <path d="M713,312 L725.500,313.500 L722,320.500 L709.500,318.500 Z"/>
  <path d="M704,320 L721,322 L716,329 L700,327 Z"/>
  <path d="M698,327.500 L715,330.500 L709,337.500 L695,334.500 Z"/>
  <path d="M693,335.500 L708,339 L702,345 L690,342 Z"/>
</g>
<!-- light strips -->
<g fill="#bcd9ad">
  <rect x="660" y="296" width="3" height="21.500"/>
  <rect x="669.500" y="320" width="2.500" height="15.500"/>
  <rect x="630" y="339" width="2.300" height="12"/>
  <rect x="593" y="353" width="2.200" height="15"/>
  <rect x="586.500" y="322" width="1.800" height="26" opacity=".8"/>
  <rect x="689.500" y="297" width="1.500" height="9" opacity=".6"/>
</g>
<!-- rod -->
<path fill="none" stroke="#15270f" stroke-width="5" stroke-linecap="round" d="M588,352 L706,303.500"/>
<path fill="none" stroke="#2e4a22" stroke-width="3" stroke-linecap="round" d="M588,351 L706,302.500"/>
<!-- ===== UPPER STRUCTURE ===== -->
<!-- dark backdrop -->
<path fill="#0e1b09" d="M436.200,203.600 L496.200,176.800 L548,156 L562,159.500 L573,155.500 L711,193 L711,202 L723,205.600 L723,257 L610.500,302 L585,260 L448,208 Z"/>
<path fill="none" stroke="#1b2d14" stroke-width="1" d="M543.400,160.800 L616,183.600"/>
<!-- ledge band -->
<path fill="#15270f" d="M711,195 L711,202 L640,231 L593,250 L585,247 L664.500,212 Z"/>
<!-- hull right side -->
<path fill="#1b3314" d="M610.500,252 L723,205.600 L723,257 L669.800,280.600 L610.500,302 Z"/>
<!-- right slope -->
<path fill="#213919" d="M580,199.200 L616.100,183.600 L664.500,211.800 L585,247 Z"/>
<!-- front slope -->
<path fill="#3a5428" d="M448.800,208 L496.200,177.400 L580,199.200 L585,247 Z"/>
<path fill="none" stroke="#1a2e12" stroke-width="1" d="M580,199.200 L585,247"/>
<!-- corner pillar + headlight panel -->
<path fill="#2a4520" d="M584,247 L593,248.800 L593,298 L584,294.400 Z"/>
<path fill="#2f4a24" d="M593,248.800 L610.500,252 L610.500,302 L593,298 Z"/>
<path fill="none" stroke="#1a2e12" stroke-width="1" d="M593,256 L610.500,259.500"/>
<ellipse cx="596.300" cy="276" rx="9.200" ry="10.800" fill="#314d26" stroke="#14260e" stroke-width="1.200"/>
<path stroke="#14260e" stroke-width="1" d="M595,265.500 V286.500"/>
<!-- front face -->
<path fill="#36502a" d="M436.200,203.600 L584,247 L584,294.400 L436.200,255.600 Z"/>
<g fill="none" stroke="#1b3013" stroke-width="1.200">
  <path d="M447.800,209.400 L584,247.200"/>
  <path d="M447.800,211.200 L584,249" opacity=".7"/>
  <path d="M447.800,220 L584,257.500"/>
</g>
<!-- left pillar + headlight -->
<path fill="#314b25" stroke="#1b3013" stroke-width="1" d="M436.200,203.600 L447.800,207 L447.800,258.600 L436.200,255.600 Z"/>
<path fill="none" stroke="#1b3013" stroke-width="1" d="M436.200,208.800 L447.800,211.800 M436.200,218.800 L447.800,221.800"/>
<path fill="#304b25" stroke="#14260e" stroke-width="1.100" d="M447.500,222 L442,222 A9.500,10 0 0 0 442,242 L447.500,242 Z"/>
<path fill="none" stroke="#14260e" stroke-width="1" d="M441,222.500 V241.500"/>
<!-- left dark roof sliver -->
<path fill="#0e1b09" d="M436.200,203.600 L496.200,176.800 L448.800,208.500 Z"/>
<!-- gun port -->
<path fill="#14260e" d="M450.600,235.600 L488,244.400 L488,265.500 L476,262.500 L450.600,256 Z"/>
<path fill="#324d26" d="M450.600,241.500 L476,247.500 L476,262.500 L450.600,256 Z"/>
<rect x="477" y="247" width="6" height="19" fill="#cfe8c2"/>
<!-- gun barrel -->
<path fill="none" stroke="#14260e" stroke-width="6.500" stroke-linecap="round" d="M464,251.500 L402,278"/>
<path fill="none" stroke="#2e4a22" stroke-width="4" stroke-linecap="round" d="M464,250.500 L402,277"/>
<rect x="431.500" y="264" width="1.500" height="4" fill="#e8f2e0" transform="rotate(-20 432 266)"/>
<!-- axis cross -->
<g font-family="'Liberation Sans',sans-serif" font-size="7.500" font-weight="bold" fill="#26262e">
  <path d="M1001.700,485.500 V501.500" stroke="#22207a" stroke-width="1.600" fill="none"/>
  <path d="M1001.700,501.300 L1016.500,505.300" stroke="#a8283a" stroke-width="1.500" fill="none"/>
  <path d="M1002,501 L1009.500,497.800" stroke="#5aa45a" stroke-width="1.400" fill="none" opacity=".85"/>
  <text x="1003.600" y="486">Z</text>
  <text x="1011.700" y="498">Y</text>
  <text x="1017.800" y="505.600">X</text>
</g>
</svg>
</div>

<!-- COMBO -->
<div id="combo">
  <!-- coordinates relative to (31,78) -->
  <span class="t" style="left:1.8px;top:2.2px;font-size:11px;letter-spacing:0.11px;color:#4c4c4c">Combo View</span>
  <svg class="abs" style="left:89px;top:4px" width="22" height="11" viewBox="0 0 22 11">
    <rect x="0.700" y="1.200" width="7.300" height="7.800" rx="1.500" fill="#ededeb" stroke="#85857f" stroke-width=".9"/>
    <path d="M2.800 7 L5.800 3.300 M3.800 3.300 H5.800 V5.300" stroke="#6d6d66" stroke-width=".9" fill="none"/>
    <rect x="13.200" y="1.200" width="7.800" height="7.800" rx="1.500" fill="#ededeb" stroke="#85857f" stroke-width=".9"/>
    <path d="M15.200 3.300 L19 6.900 M19 3.300 L15.200 6.900" stroke="#55554f" stroke-width="1.400" fill="none"/>
  </svg>
  <!-- tabs -->
  <div class="abs" style="left:45px;top:21px;width:39px;height:20px;background:#dddddb;border:1px solid #d2d2cf;border-bottom:none;border-radius:2px 2px 0 0"></div>
  <div class="abs" style="left:0px;top:19px;width:45px;height:23px;background:#f8f8f7;border:1px solid #dcdcd9;border-bottom:none;border-radius:3px 3px 0 0"></div>
  <span class="t" style="left:6.4px;top:22.8px;font-size:11px;letter-spacing:0.46px;color:#4c4c4c">Model</span>
  <span class="t" style="left:51.4px;top:23.4px;font-size:11px;letter-spacing:-0.38px;color:#4c4c4c">Tasks</span>
  <!-- tree frame -->
  <div class="abs" style="left:1px;top:42px;width:110px;height:194px;background:#fff;border:1px solid #d4d4d1"></div>
  <div class="abs" style="left:2px;top:60px;width:108px;height:1px;background:#dededb"></div>
  <span class="t" style="left:5.0px;top:45.2px;font-size:11px;letter-spacing:0.33px;color:#4c4c4c">Labels &amp; Attributes</span>
  <span class="t" style="left:4.5px;top:62.0px;font-size:11px;letter-spacing:0.37px;color:#3c3c3c">Application</span>
  <svg class="abs" style="left:7px;top:77px" width="26" height="13" viewBox="0 0 26 13">
    <path d="M1 2.500 H8 L4.500 9 Z" fill="#8a8a86" stroke="#4c4c4a" stroke-width="1"/>
    <rect x="13.500" y="0.5" width="10" height="11" rx="1.5" fill="#f1f1ef" stroke="#b9b9b6"/>
    <ellipse cx="17.500" cy="7.500" rx="3" ry="2.600" fill="#3d6fa5"/>
    <ellipse cx="20" cy="4.200" rx="2.600" ry="2.400" fill="#b3182c"/>
  </svg>
  <span class="t" style="left:36.0px;top:75.7px;font-size:11px;letter-spacing:-0.10px;color:#333;font-weight:bold">&#1090; 27</span>
  <svg class="abs" style="left:22px;top:92px" width="26" height="12" viewBox="0 0 26 12">
    <path d="M1 2 L7.500 5.500 L1 9 Z" fill="#8a8a86" stroke="#4c4c4a" stroke-width="1"/>
    <g transform="rotate(-35 18 6)"><rect x="12.200" y="2.300" width="11.600" height="7.400" rx="3.700" fill="#4f82b8"/><rect x="12.200" y="2.300" width="11.600" height="3.500" rx="3" fill="#6c9bcd" opacity=".7"/></g>
  </svg>
  <span class="t" style="left:51.4px;top:90.0px;font-size:11px;letter-spacing:-0.14px;color:#333;font-weight:bold">T-27</span>
  <!-- tree h scrollbar -->
  <div class="abs" style="left:2px;top:226px;width:108px;height:9px;background:#ececea"></div>
  <div class="abs" style="left:11px;top:226px;width:86px;height:9px;background:#cfcfcd;border-top:1px solid #c2c2bf;border-bottom:1px solid #c2c2bf"></div>
  <svg class="abs" style="left:2px;top:226px" width="108" height="9" viewBox="0 0 108 9"><path d="M6.500 2.500 L3.500 4.800 L6.500 7 Z" fill="#c0c0bd"/><path d="M102 2.800 L105 5 L102 7 Z" fill="#555"/></svg>
  <!-- splitter -->
  <svg class="abs" style="left:52px;top:237px" width="10" height="3" viewBox="0 0 10 3"><circle cx="1.500" cy="1.500" r=".8" fill="#b5b5b2"/><circle cx="4.500" cy="1.500" r=".8" fill="#b5b5b2"/><circle cx="7.500" cy="1.500" r=".8" fill="#b5b5b2"/></svg>
  <!-- property frame -->
  <div class="abs" style="left:2px;top:241px;width:107px;height:205px;background:#fff;border:1px solid #d9d9d6"></div>
  <div class="abs" style="left:3px;top:261px;width:106px;height:1px;background:#e2e2df"></div>
  <div class="abs" style="left:77px;top:246px;width:1px;height:12px;background:#e4e4e1"></div>
  <span class="t" style="left:6.8px;top:245.6px;font-size:11px;letter-spacing:0.43px;color:#4c4c4c">Property</span>
  <div class="abs" style="left:81px;top:245px;width:28px;height:15px;overflow:hidden"><span class="t" style="left:1px;top:0.600px;font-size:11px;letter-spacing:0.400px;color:#4c4c4c">Value</span></div>
  <!-- prop scrollbar -->
  <div class="abs" style="left:3px;top:436px;width:106px;height:9px;background:#ececea"></div>
  <div class="abs" style="left:12px;top:436px;width:61px;height:9px;background:#cfcfcd;border-top:1px solid #c2c2bf;border-bottom:1px solid #c2c2bf"></div>
  <svg class="abs" style="left:3px;top:436px" width="106" height="9" viewBox="0 0 106 9"><path d="M6.500 2.500 L3.500 4.800 L6.500 7 Z" fill="#c0c0bd"/><path d="M100.500 2.800 L103.500 5 L100.500 7 Z" fill="#555"/></svg>
  <!-- bottom tabs -->
  <div class="abs" style="left:2px;top:446px;width:109px;height:23px;background:#fff;border-bottom:1px solid #d6d6d3"></div>
  <div class="abs" style="left:2px;top:446px;width:37px;height:21px;background:#dfdfdd;border:1px solid #d6d6d3;border-top:none;border-radius:0 0 2px 2px"></div>
  <div class="abs" style="left:38px;top:446px;width:37px;height:23px;background:#fff;border:1px solid #dcdcd9;border-top:none;border-radius:0 0 3px 3px"></div>
  <span class="t" style="left:7.6px;top:449.6px;font-size:11px;letter-spacing:0.45px;color:#4c4c4c">View</span>
  <span class="t" style="left:45.0px;top:450.2px;font-size:11px;letter-spacing:0.08px;color:#4c4c4c">Data</span>
  <!-- dock splitter strip -->
  <div class="abs" style="left:112px;top:0;width:4px;height:470px;background:#f5f5f4"></div>
  <svg class="abs" style="left:112px;top:230px" width="4" height="10" viewBox="0 0 4 10"><rect x="0" y="2" width="4" height="1" fill="#d5d5d2"/><rect x="0" y="6" width="4" height="1" fill="#d5d5d2"/></svg>
</div>

<!-- TABBAR -->
<div id="tabbar">
  <!-- coords relative to (148,523) -->
  <div class="abs" style="left:0;top:0;width:102px;height:23px;background:#dfdfdc;border:1px solid #d3d3d0;border-top:none;border-radius:0 0 2px 2px"></div>
  <div class="abs" style="left:102px;top:0;width:84px;height:24px;background:#fcfcfb;border:1px solid #d9d9d6;border-top:none;border-radius:0 0 3px 3px"></div>
  <svg class="abs" style="left:0;top:0" width="200" height="25" viewBox="148 523 200 25">
    <g id="fcico"><path d="M153.500,529.500 H160 V532 H156.500 V534 H159 V536.300 H156.500 V541 H153.500 Z" fill="#c8141c"/><path d="M153.500,529.500 H155 V541 H153.500 Z" fill="#8e0d14"/>
    <g transform="translate(161.300 537)"><g fill="#3f6fb5"><rect x="-.9" y="-3.700" width="1.800" height="7.400"/><rect x="-.9" y="-3.700" width="1.800" height="7.400" transform="rotate(45)"/><rect x="-.9" y="-3.700" width="1.800" height="7.400" transform="rotate(90)"/><rect x="-.9" y="-3.700" width="1.800" height="7.400" transform="rotate(135)"/></g><circle r="2.700" fill="#3f6fb5"/><circle r="1.300" fill="#e9eef6"/></g></g>
    <use href="#fcico" x="102"/>
    <path d="M232.500,531.500 L240,539 M240,531.500 L232.500,539" stroke="#5a5a57" stroke-width="2.800"/>
    <path d="M316,531.500 L323.500,539 M323.500,531.500 L316,539" stroke="#5a5a57" stroke-width="2.800"/>
  </svg>
  <span class="t" style="left:23.2px;top:5.2px;font-size:11px;letter-spacing:0.17px;color:#4c4c4c">Start page</span>
  <span class="t" style="left:125.6px;top:5.2px;font-size:11px;letter-spacing:-0.29px;color:#4c4c4c">&#1090; 27 : 1</span>
</div>

<!-- STATUS -->
<div id="status">
  <!-- coords relative to (31,548) -->
  <svg class="abs" style="left:0;top:0" width="993" height="28" viewBox="31 549 993 28">
    <rect x="853.800" y="555.500" width="9.400" height="13.800" rx="4.500" fill="none" stroke="#2e2e2e" stroke-width="1.700"/>
    <path d="M858.500,558 V561.500" stroke="#2e2e2e" stroke-width="1.700" stroke-linecap="round"/>
    <path d="M895.500,560 H901.500 L898.500,565.500 Z" fill="#8a8a87"/>
  </svg>
  <span class="t" style="left:839.9px;top:6.4px;font-size:10.5px;letter-spacing:-0.54px;color:#5a5a5a">CAD</span>
  <span class="t" style="left:881.0px;top:6.2px;font-size:11px;letter-spacing:0.01px;color:#4c4c4c">79,08 mm x 40,18 mm</span>
</div>

</div>
</body>
</html>
